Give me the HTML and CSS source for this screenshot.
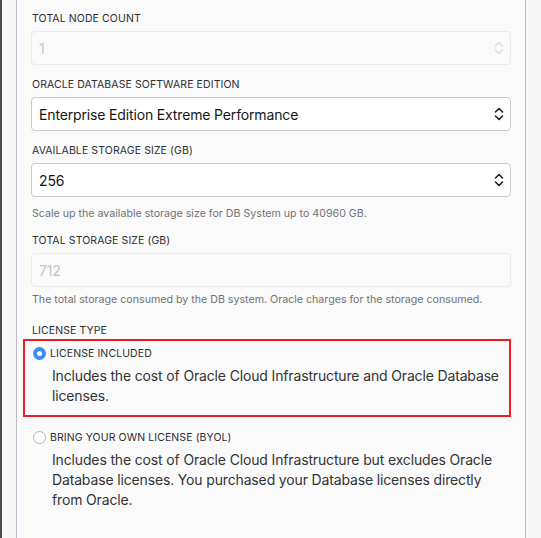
FILE: index.html
```html
<!DOCTYPE html>
<html>
<head>
<meta charset="utf-8">
<link rel="stylesheet" href="styles.css">
</head>
<body>
<div class="frame">
  <div class="edge-dark"></div>
  <div class="gutter"></div>
  <div class="panel">
    <div class="field">
      <div class="label">TOTAL NODE COUNT</div>
      <div class="input disabled"><span class="value">1</span>
        <svg class="spin" width="10" height="16" viewBox="0 0 10 16"><path d="M1.5 6 L5 2.5 L8.5 6 M1.5 10 L5 13.5 L8.5 10" fill="none" stroke="currentColor" stroke-width="1.3" stroke-linecap="round" stroke-linejoin="round"/></svg>
      </div>
    </div>
    <div class="field">
      <div class="label">ORACLE DATABASE SOFTWARE EDITION</div>
      <div class="input"><span class="value">Enterprise Edition Extreme Performance</span>
        <svg class="spin" width="10" height="16" viewBox="0 0 10 16"><path d="M1.5 6 L5 2.5 L8.5 6 M1.5 10 L5 13.5 L8.5 10" fill="none" stroke="currentColor" stroke-width="1.6" stroke-linecap="round" stroke-linejoin="round"/></svg>
      </div>
    </div>
    <div class="field">
      <div class="label">AVAILABLE STORAGE SIZE (GB)</div>
      <div class="input"><span class="value">256</span>
        <svg class="spin" width="10" height="16" viewBox="0 0 10 16"><path d="M1.5 6 L5 2.5 L8.5 6 M1.5 10 L5 13.5 L8.5 10" fill="none" stroke="currentColor" stroke-width="1.6" stroke-linecap="round" stroke-linejoin="round"/></svg>
      </div>
      <div class="help help-first">Scale up the available storage size for DB System up to 40960 GB.</div>
    </div>
    <div class="field field-last">
      <div class="label">TOTAL STORAGE SIZE (GB)</div>
      <div class="input disabled"><span class="value">712</span></div>
      <div class="help help-second">The total storage consumed by the DB system. Oracle charges for the storage consumed.</div>
    </div>
    <div class="label license-label">LICENSE TYPE</div>
    <div class="option selected">
      <div class="opt-row"><span class="radio on"></span><span class="opt-title">LICENSE INCLUDED</span></div>
      <div class="opt-desc">Includes the cost of Oracle Cloud Infrastructure and Oracle Database licenses.</div>
    </div>
    <div class="option">
      <div class="opt-row"><span class="radio"></span><span class="opt-title">BRING YOUR OWN LICENSE (BYOL)</span></div>
      <div class="opt-desc">Includes the cost of Oracle Cloud Infrastructure but excludes Oracle Database licenses. You purchased your Database licenses directly from Oracle.</div>
    </div>
  </div>
  <div class="gutter-right"></div>
</div>
</body>
</html>
```
FILE: styles.css
```css
html, body {
  margin: 0;
  padding: 0;
  background: #f7f7f8;
  font-family: Inter, "Liberation Sans", sans-serif;
  color: #222;
}
.frame {
  display: flex;
  height: 538px;
  overflow: hidden;
}
.edge-dark {
  width: 2px;
  background: #4d4d50;
  flex: none;
}
.gutter {
  width: 14px;
  background: #f7f7f8;
  flex: none;
}
.panel {
  width: 510px;
  flex: none;
  box-sizing: border-box;
  background: #fafafb;
  border-left: 1px solid #b9bdc8;
  border-right: 1px solid #b9bdc8;
  padding: 11px 14px 0 14px;
}
.gutter-right {
  flex: 1;
  background: #f7f7f8;
}
.label {
  font-size: 10.5px;
  line-height: 14px;
  letter-spacing: 0.1px;
  color: #2e2e30;
  padding-left: 1px;
  padding-top: 1px;
  margin-bottom: 5px;
}
.field {
  margin-bottom: 12px;
}
.field-last {
  margin-bottom: 16px;
}
.input {
  height: 34px;
  box-sizing: border-box;
  border: 1px solid #c9c9ce;
  border-radius: 4px;
  background: #fff;
  display: flex;
  align-items: center;
  justify-content: space-between;
  padding: 0 6px 0 7px;
  color: #161616;
}
.input .value {
  font-size: 14px;
  letter-spacing: -0.15px;
}
.input .spin {
  color: #1e1e1e;
}
.input.disabled {
  background: #fafafa;
  border-color: #ebebed;
}
.input.disabled .value {
  color: #c4c4c8;
}
.input.disabled .spin {
  color: #d9d9dc;
}
.help {
  font-size: 10.65px;
  line-height: 14px;
  color: #727276;
  padding-left: 1px;
  padding-top: 1px;
}
.help-first {
  margin-top: 9px;
}
.help-second {
  margin-top: 5px;
}
.license-label {
  margin-bottom: 1px;
}
.option {
  margin-left: -8px;
  border: 2px solid transparent;
  padding: 5px 4px 9px 8px;
  margin-bottom: 6px;
}
.option.selected {
  border-color: #ee1c25;
}
.opt-row {
  display: flex;
  align-items: center;
  height: 14px;
}
.radio {
  width: 13px;
  height: 13px;
  box-sizing: border-box;
  border-radius: 50%;
  border: 1px solid #b5b5b9;
  background: #fff;
  margin-right: 4px;
  flex: none;
  position: relative;
}
.radio.on {
  border: none;
  background: #3b8cec;
}
.radio.on::after {
  content: "";
  position: absolute;
  width: 5px;
  height: 5px;
  border-radius: 50%;
  background: #fff;
  left: 4px;
  top: 4px;
}
.opt-title {
  font-size: 10.5px;
  letter-spacing: 0.1px;
  color: #2e2e30;
}
.opt-desc {
  margin-top: 6px;
  padding-left: 19px;
  font-size: 14px;
  line-height: 20px;
  letter-spacing: -0.15px;
  color: #333;
}
```
